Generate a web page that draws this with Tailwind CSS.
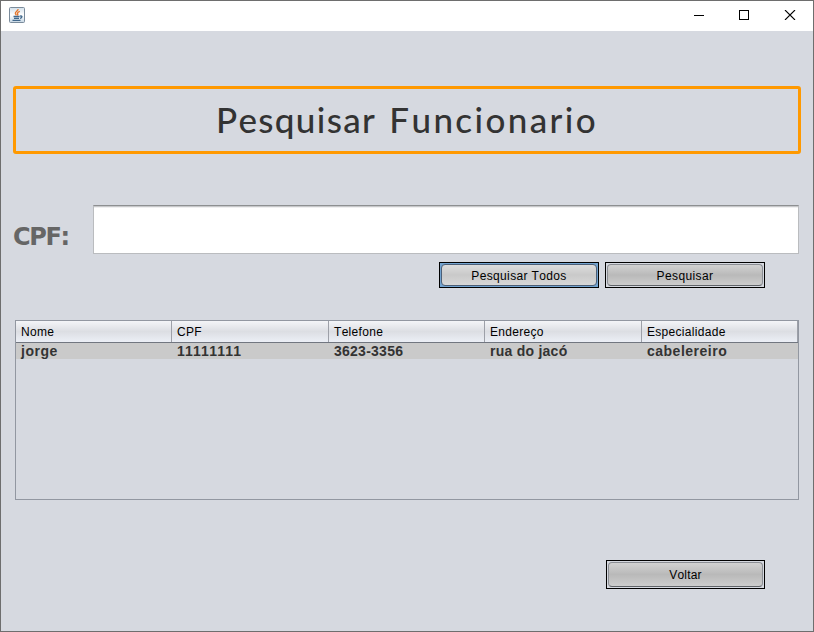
<!DOCTYPE html>
<html lang="pt">
<head>
<meta charset="utf-8">
<title>Pesquisar Funcionario</title>
<script src="https://cdn.jsdelivr.net/npm/@tailwindcss/browser@4"></script>
</head>
<body class="w-[814px] h-[632px] overflow-hidden font-['Liberation_Sans',Arial,sans-serif] text-black [font-kerning:none]">
<div class="w-[814px] h-[632px] border border-[#6e6e6e] bg-[#d6d9e0] flex flex-col">
  <header class="h-[30px] shrink-0 bg-white flex items-start justify-between pl-2 pr-[17px]">
    <svg class="mt-[6px]" width="16" height="16" viewBox="0 0 16 16" fill="none">
      <defs><linearGradient id="j" x1="0" y1="0" x2="0" y2="1"><stop stop-color="#d3e0ea"/><stop offset=".5" stop-color="#fff"/><stop offset="1" stop-color="#c5d6e3"/></linearGradient></defs>
      <rect x=".5" y=".5" width="15" height="15" rx="1" fill="url(#j)" stroke="#7a8b9b"/>
      <path d="M9 2.2C9.4 4 6 4.6 6.4 6.5C6.6 7.3 7.2 7.7 7.3 8.4M10.8 4.4C8.8 5.2 8 6 8.7 7C9 7.6 8.8 8 8.4 8.5" stroke="#e5752a" stroke-width="1.4"/>
      <path d="M4.5 9.5H10.6M5 11.4H10M3.5 13.4H11.5M11 9.2C13.8 8.3 13.4 11 11 11.3" stroke="#41688c" stroke-width="1.3"/>
    </svg>
    <div class="flex items-start gap-[35px] mt-[9px]">
      <svg width="10" height="10" viewBox="0 0 10 10" shape-rendering="crispEdges"><path d="M0 5h10v1H0z"/></svg>
      <svg width="10" height="10" viewBox="0 0 10 10" shape-rendering="crispEdges"><path d="M.5.5h9v9h-9z" fill="none" stroke="#000"/></svg>
      <svg width="12" height="10" viewBox="0 0 12 10"><path d="M1 0L11 10M11 0L1 10" stroke="#000" stroke-width="1.1"/></svg>
    </div>
  </header>
  <main class="flex flex-col">
    <h1 class="mt-[55px] ml-3 w-[788px] h-[68px] border-[3px] border-[#ff9900] rounded-[3px] flex items-center justify-center gap-[13px] pb-[2px] font-['Lato',sans-serif] font-medium text-[35px] leading-none text-[#333] whitespace-nowrap"><span class="tracking-[1.35px]">Pesquisar </span><span class="tracking-[2.4px]">Funcionario</span></h1>
    <div class="mt-[51px] flex h-[49px]">
      <label for="cpf" class="w-[92px] pl-3 pt-[18px] font-['DejaVu_Sans',sans-serif] font-bold text-[24px] leading-[28px] tracking-[-1.4px] text-[#666]"><span>CPF:</span></label>
      <input id="cpf" class="w-[706px] h-[49px] bg-white border border-[#babcbf] border-t-[#8d8f91] shadow-[inset_0_1px_0_#c7c8ca,inset_0_2px_0_#f0f0f1] outline-none">
    </div>
    <div class="mt-[8px] ml-[438px] flex gap-[6px]">
      <button class="w-[160px] h-[26px] border border-black bg-[#73a4d1] p-px flex"><span class="flex-1 h-full rounded-[4px] border border-[#4c5f77] bg-linear-to-b from-[#dddddd] via-[#c9c9c9] to-[#d8d8d8] flex items-center justify-center text-[12px] leading-none tracking-[0.35px] pt-px">Pesquisar Todos</span></button>
      <button class="w-[160px] h-[26px] border border-black p-px flex"><span class="flex-1 h-full rounded-[4px] border border-[#8b8e94] border-b-[#5f6368] bg-linear-to-b from-[#d2d2d2] via-[#b9b9b9] to-[#cdcdcd] flex items-center justify-center text-[12px] leading-none tracking-[0.4px] pt-px">Pesquisar</span></button>
    </div>
    <div class="mt-[32px] ml-[14px] w-[784px] h-[180px] border border-[#9297a1]">
      <div class="grid grid-cols-[156px_157px_156px_157px_156px] h-[22px] bg-linear-to-b from-[#f4f5f8] via-[#dcdee3] to-[#eceff6] border-b border-[#717680] text-[12px] leading-[22px] tracking-[0.3px] *:pl-[5px] *:h-[21px] *:border-r *:border-[#9da0a8]">
        <div>Nome</div><div>CPF</div><div>Telefone</div><div>Endereço</div><div>Especialidade</div>
      </div>
      <div class="grid grid-cols-[156px_157px_156px_157px_156px] h-4 bg-[#cacaca] text-[14px] leading-4 font-bold tracking-[0.25px] text-[#333] *:pl-[5px]">
        <div class="tracking-[0.5px]">jorge</div><div>11111111</div><div>3623-3356</div><div>rua do jacó</div><div class="tracking-[0.5px]">cabelereiro</div>
      </div>
    </div>
    <button class="mt-[60px] ml-[605px] w-[159px] h-[29px] border border-black p-px flex"><span class="flex-1 h-full rounded-[4px] border border-[#8b8e94] border-b-[#5f6368] bg-linear-to-b from-[#d2d2d2] via-[#b9b9b9] to-[#cdcdcd] flex items-center justify-center text-[12px] leading-none tracking-[0.2px]">Voltar</span></button>
  </main>
</div>
</body>
</html>
